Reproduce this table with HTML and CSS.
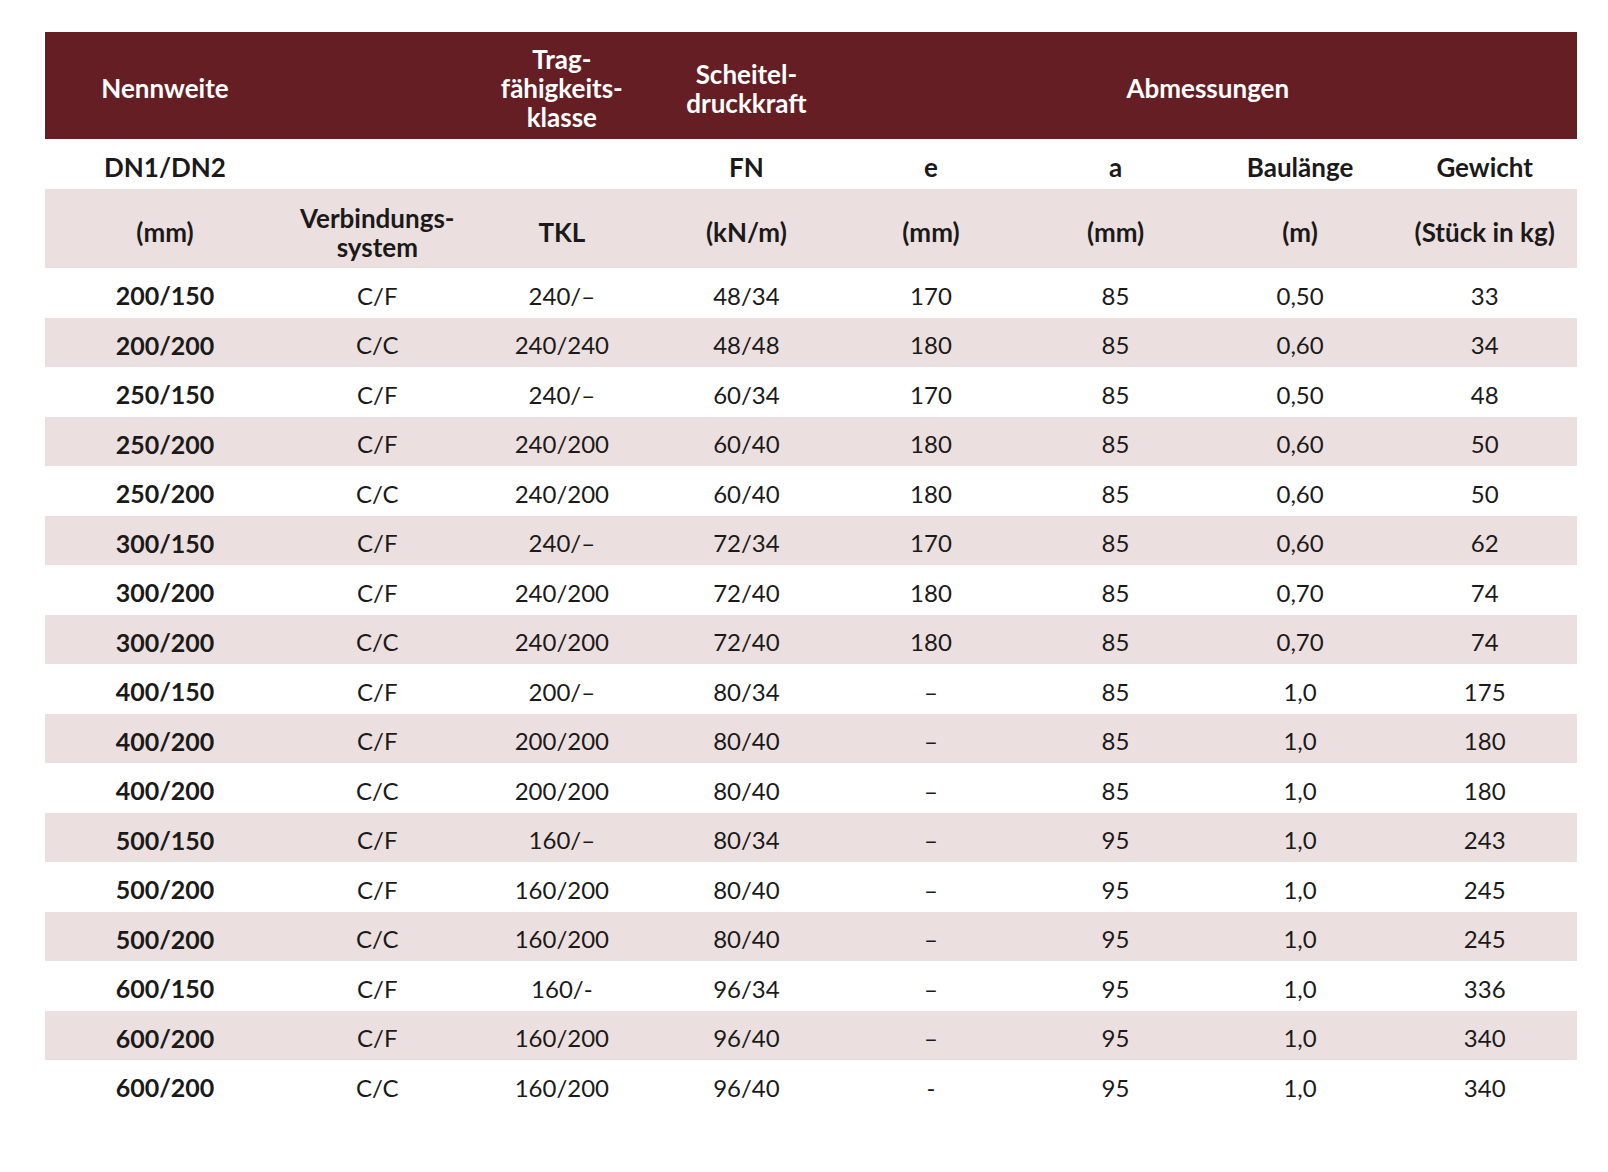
FILE: index.html
```html
<!DOCTYPE html>
<html lang="de">
<head>
    <title>Abmessungen</title>
    <meta charset="UTF-8">
    <link rel="stylesheet" href="styles.css">
</head>
<body>
    <table class="spec">
        <colgroup>
            <col class="c-first">
            <col class="c-col"><col class="c-col"><col class="c-col">
            <col class="c-col"><col class="c-col"><col class="c-col"><col class="c-col">
        </colgroup>
        <thead>
            <tr class="head">
                <th>Nennweite</th>
                <th></th>
                <th>Trag-<br>fähigkeits-<br>klasse</th>
                <th>Scheitel-<br>druckkraft</th>
                <th colspan="4">Abmessungen</th>
            </tr>
            <tr class="sub">
                <th>DN1/DN2</th>
                <th></th>
                <th></th>
                <th>FN</th>
                <th>e</th>
                <th>a</th>
                <th>Baulänge</th>
                <th>Gewicht</th>
            </tr>
            <tr class="units">
                <th>(mm)</th>
                <th>Verbindungs-<br>system</th>
                <th>TKL</th>
                <th>(kN/m)</th>
                <th>(mm)</th>
                <th>(mm)</th>
                <th>(m)</th>
                <th>(Stück in kg)</th>
            </tr>
        </thead>
        <tbody>
            <tr><td>200/150</td><td>C/F</td><td>240/–</td><td>48/34</td><td>170</td><td>85</td><td>0,50</td><td>33</td></tr>
            <tr><td>200/200</td><td>C/C</td><td>240/240</td><td>48/48</td><td>180</td><td>85</td><td>0,60</td><td>34</td></tr>
            <tr><td>250/150</td><td>C/F</td><td>240/–</td><td>60/34</td><td>170</td><td>85</td><td>0,50</td><td>48</td></tr>
            <tr><td>250/200</td><td>C/F</td><td>240/200</td><td>60/40</td><td>180</td><td>85</td><td>0,60</td><td>50</td></tr>
            <tr><td>250/200</td><td>C/C</td><td>240/200</td><td>60/40</td><td>180</td><td>85</td><td>0,60</td><td>50</td></tr>
            <tr><td>300/150</td><td>C/F</td><td>240/–</td><td>72/34</td><td>170</td><td>85</td><td>0,60</td><td>62</td></tr>
            <tr><td>300/200</td><td>C/F</td><td>240/200</td><td>72/40</td><td>180</td><td>85</td><td>0,70</td><td>74</td></tr>
            <tr><td>300/200</td><td>C/C</td><td>240/200</td><td>72/40</td><td>180</td><td>85</td><td>0,70</td><td>74</td></tr>
            <tr><td>400/150</td><td>C/F</td><td>200/–</td><td>80/34</td><td>–</td><td>85</td><td>1,0</td><td>175</td></tr>
            <tr><td>400/200</td><td>C/F</td><td>200/200</td><td>80/40</td><td>–</td><td>85</td><td>1,0</td><td>180</td></tr>
            <tr><td>400/200</td><td>C/C</td><td>200/200</td><td>80/40</td><td>–</td><td>85</td><td>1,0</td><td>180</td></tr>
            <tr><td>500/150</td><td>C/F</td><td>160/–</td><td>80/34</td><td>–</td><td>95</td><td>1,0</td><td>243</td></tr>
            <tr><td>500/200</td><td>C/F</td><td>160/200</td><td>80/40</td><td>–</td><td>95</td><td>1,0</td><td>245</td></tr>
            <tr><td>500/200</td><td>C/C</td><td>160/200</td><td>80/40</td><td>–</td><td>95</td><td>1,0</td><td>245</td></tr>
            <tr><td>600/150</td><td>C/F</td><td>160/-</td><td>96/34</td><td>–</td><td>95</td><td>1,0</td><td>336</td></tr>
            <tr><td>600/200</td><td>C/F</td><td>160/200</td><td>96/40</td><td>–</td><td>95</td><td>1,0</td><td>340</td></tr>
            <tr><td>600/200</td><td>C/C</td><td>160/200</td><td>96/40</td><td>-</td><td>95</td><td>1,0</td><td>340</td></tr>
        </tbody>
    </table>
</body>
</html>
```

FILE: styles.css
```css
body {
    margin: 0;
    padding: 32px 0 0 45px;
    background-color: #ffffff;
    font-family: Lato, "Open Sans", sans-serif;
    color: #1b1a1a;
}
.spec {
    border-collapse: collapse;
    table-layout: fixed;
    width: 1532px;
}
.c-first {
    width: 240px;
}
.spec th,
.spec td {
    padding: 0;
    text-align: center;
    vertical-align: middle;
    font-size: 24px;
}
.spec th {
    font-weight: 700;
    font-size: 26px;
    line-height: 29px;
}
.head {
    height: 107px;
    background-color: #651f24;
    color: #ffffff;
}
.head th {
    padding-top: 6px;
}
.sub {
    height: 50px;
    background-color: #ffffff;
}
.sub th {
    padding-top: 6px;
}
.units {
    height: 79px;
    background-color: #ebe0df;
}
.units th {
    padding-top: 8px;
}
.spec tbody tr {
    height: 49.5px;
}
.spec tbody tr:nth-child(even) {
    background-color: #ebe0df;
}
.spec td {
    font-weight: 400;
    padding-top: 5px;
}
.spec td:first-child {
    font-weight: 700;
    font-size: 25px;
}
```
